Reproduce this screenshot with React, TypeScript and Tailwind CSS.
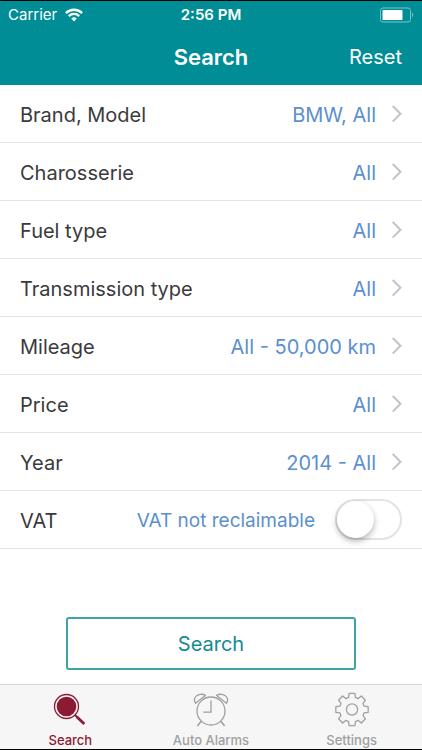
import React, { useState } from 'react';

type TabId = 'search' | 'alarms' | 'settings';

const FILTERS = [
  { label: 'Brand, Model', value: 'BMW, All' },
  { label: 'Charosserie', value: 'All' },
  { label: 'Fuel type', value: 'All' },
  { label: 'Transmission type', value: 'All' },
  { label: 'Mileage', value: 'All - 50,000 km' },
  { label: 'Price', value: 'All' },
  { label: 'Year', value: '2014 - All' },
];

const WifiIcon = () => (
  <svg width="18" height="14" viewBox="0 0 18 14" fill="none" stroke="currentColor" strokeWidth="2.3" aria-hidden="true">
    <path d="M0.9 5.1a11.5 11.5 0 0 1 16.2 0" />
    <path d="M3.8 8.1a7.4 7.4 0 0 1 10.4 0" />
    <path d="M6.2 10.6a4 4 0 0 1 5.6 0L9 13.4z" fill="currentColor" stroke="none" />
  </svg>
);

const BatteryIcon = () => (
  <svg width="34" height="16" viewBox="0 0 34 16" fill="none" aria-hidden="true">
    <rect x="0.5" y="1" width="30" height="14" rx="2.5" stroke="#7cc4c8" />
    <rect x="2.5" y="3" width="20" height="10" rx="0.8" fill="#fff" />
    <path d="M32 5.8c1.6 0.6 1.6 3.8 0 4.4z" fill="#7cc4c8" />
  </svg>
);

const ChevronIcon = () => (
  <svg width="10" height="20" viewBox="0 0 10 20" fill="none" stroke="#c3c3c8" strokeWidth="2" aria-hidden="true">
    <path d="M0.7 1l7.8 7.8-7.8 7.8" />
  </svg>
);

const MagnifierIcon = () => (
  <svg width="36" height="36" viewBox="0 0 36 36" fill="none" aria-hidden="true">
    <circle cx="14.5" cy="14.5" r="12" stroke="currentColor" strokeWidth="1.3" />
    <circle cx="14.5" cy="14.5" r="9.8" fill="currentColor" />
    <path d="M23 23l3 3" stroke="currentColor" strokeWidth="2" />
    <path d="M25 25l7.3 7" stroke="currentColor" strokeWidth="2.8" />
  </svg>
);

const AlarmIcon = () => (
  <svg width="36" height="36" viewBox="0 0 36 36" fill="none" stroke="currentColor" strokeWidth="1.3" aria-hidden="true">
    <circle cx="18" cy="19" r="14" />
    <path d="M18 8.5v11.7h-7.7" />
    <path d="M2.6 11.3C0.9 8.8 1.3 5.9 3.2 4.1c2.4-2.2 6.6-2.4 9.2-0.7z" strokeLinejoin="round" />
    <path d="M33.4 11.3c1.7-2.5 1.3-5.4-0.6-7.2-2.4-2.2-6.6-2.4-9.2-0.7z" strokeLinejoin="round" />
    <path d="M8.2 29.2L4.4 34M27.8 29.2l3.8 4.8" strokeWidth="1.6" />
  </svg>
);

// eight teeth, each one wider at its foot than at its tip
const gearPath = Array.from({ length: 8 }, (_, i) => {
  const mid = (i * Math.PI) / 4;
  return [[-0.27, 12.6], [-0.18, 16.4], [0.18, 16.4], [0.27, 12.6]]
    .map(([turn, r]) => `${(18 + r * Math.sin(mid + turn)).toFixed(2)} ${(17.5 - r * Math.cos(mid + turn)).toFixed(2)}`)
    .join('L');
}).join('L');

const GearIcon = () => (
  <svg width="36" height="36" viewBox="0 0 36 36" fill="none" stroke="currentColor" strokeWidth="1.3" strokeLinejoin="round" aria-hidden="true">
    <path d={`M${gearPath}Z`} />
    <circle cx="18" cy="17.5" r="5.6" />
  </svg>
);

const TABS: { id: TabId; label: string; icon: React.ReactNode }[] = [
  { id: 'search', label: 'Search', icon: <MagnifierIcon /> },
  { id: 'alarms', label: 'Auto Alarms', icon: <AlarmIcon /> },
  { id: 'settings', label: 'Settings', icon: <GearIcon /> },
];

const App: React.FC = () => {
  const [tab, setTab] = useState<TabId>('search');
  const [vat, setVat] = useState(false);

  return (
    <div className="min-h-screen flex flex-col bg-white border-y border-black font-['Inter',sans-serif] text-[20px] leading-6 text-[#3a3a3c]">
      <header className="bg-[#008d95] text-white">
        <div className="grid grid-cols-3 items-center h-7 px-2 text-[15px]">
          <div className="flex items-center gap-2">
            <span>Carrier</span>
            <WifiIcon />
          </div>
          <span className="text-center font-semibold">2:56 PM</span>
          <div className="flex justify-end">
            <BatteryIcon />
          </div>
        </div>
        <div className="grid grid-cols-3 items-center h-14 px-5">
          <h1 className="col-start-2 text-center text-[22px] font-semibold">Search</h1>
          <button className="justify-self-end">Reset</button>
        </div>
      </header>

      <main className="flex-1">
        {FILTERS.map(f => (
          <button key={f.label} className="flex items-center w-full h-[58px] pt-0.5 px-5 border-b border-[#e4e4e6] text-left">
            <span className="flex-1">{f.label}</span>
            <span className="mr-4 text-[#5b8fcf]">{f.value}</span>
            <ChevronIcon />
          </button>
        ))}
        <div className="flex items-center h-[58px] px-5 border-b border-[#e4e4e6]">
          <label htmlFor="vat" className="flex-1 pt-0.5">VAT</label>
          <span className="mr-5 pt-0.5 text-[19px] text-[#5b8fcf]">{vat ? 'VAT reclaimable' : 'VAT not reclaimable'}</span>
          <input
            id="vat"
            type="checkbox"
            role="switch"
            checked={vat}
            onChange={e => setVat(e.target.checked)}
            className="appearance-none flex items-center w-[67px] h-[41px] rounded-full border-2 border-[#e3e3e3] bg-white checked:bg-[#008d95] checked:justify-end before:size-[37px] before:rounded-full before:bg-white before:shadow-[0_3px_6px_rgba(0,0,0,0.3)]"
          />
        </div>

        <div className="px-[66px] pt-[68px] pb-3">
          <button className="w-full h-[53px] rounded-[3px] border-2 border-[#3fa3a7] text-[#148a90]">Search</button>
        </div>
      </main>

      <nav className="grid grid-cols-3 border-t border-[#d4d4d4] bg-[#f6f6f6]">
        {TABS.map(t => (
          <button
            key={t.id}
            onClick={() => setTab(t.id)}
            className={`flex flex-col items-center gap-1 pt-[7px] pb-px text-[13px] leading-4 font-medium ${tab === t.id ? 'text-[#8d1a33]' : 'text-[#a0a0a0]'}`}
          >
            {t.icon}
            {t.label}
          </button>
        ))}
      </nav>
    </div>
  );
};

export default App;
